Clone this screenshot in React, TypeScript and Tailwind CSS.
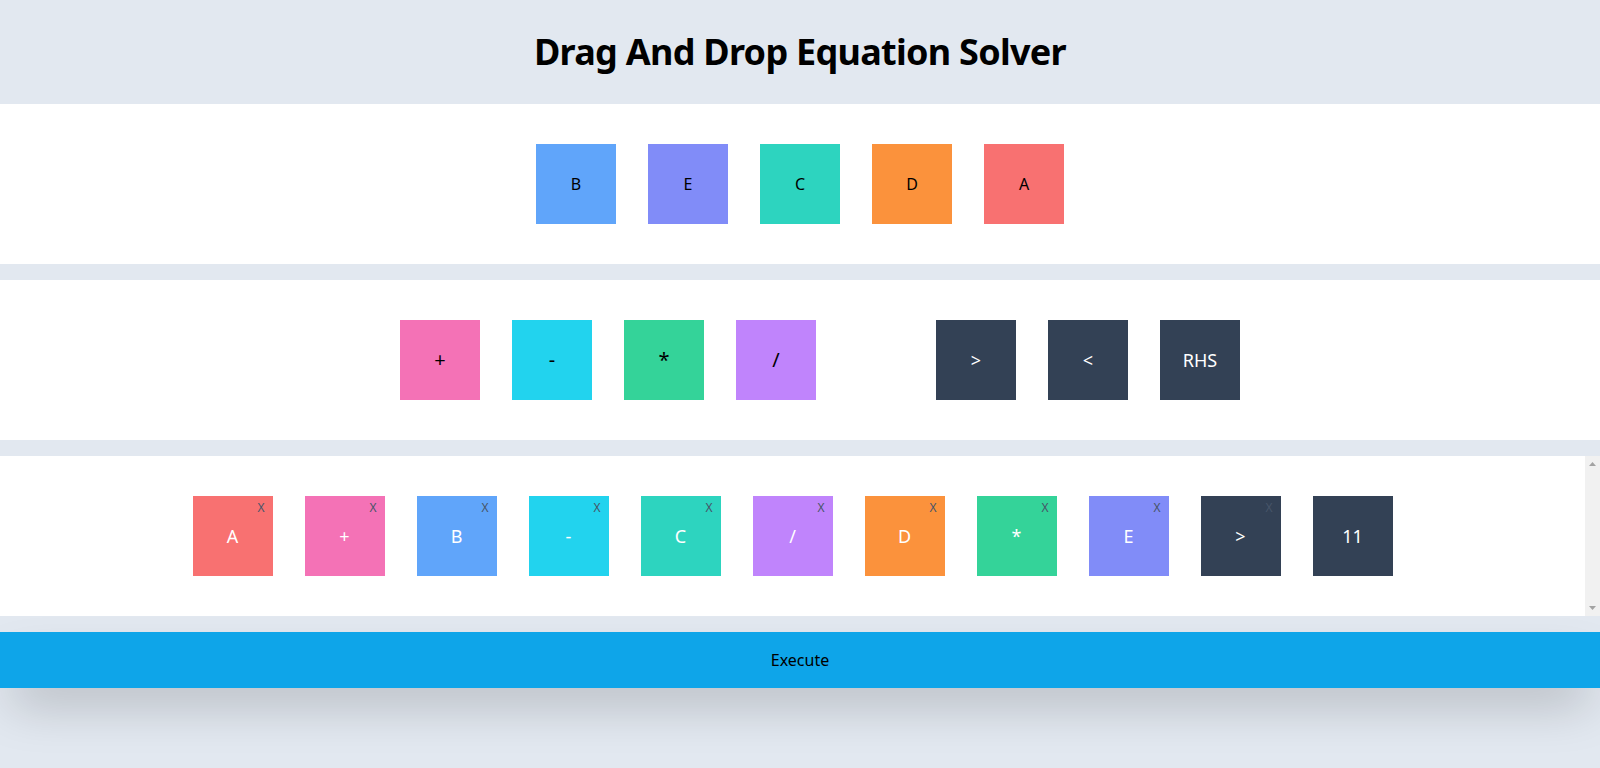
import React from 'react'

const sources = [
  { label: 'B', bg: 'bg-[#60a5fa]' },
  { label: 'E', bg: 'bg-[#818cf8]' },
  { label: 'C', bg: 'bg-[#2dd4bf]' },
  { label: 'D', bg: 'bg-[#fb923c]' },
  { label: 'A', bg: 'bg-[#f87171]' },
]

const operators = [
  { label: '+', bg: 'bg-[#f472b6]' },
  { label: '-', bg: 'bg-[#22d3ee]' },
  { label: '*', bg: 'bg-[#34d399]' },
  { label: '/', bg: 'bg-[#c084fc]' },
]

const comparators = ['>', '<', 'RHS']

const equation = [
  { label: 'A', bg: 'bg-[#f87171]', remove: true },
  { label: '+', bg: 'bg-[#f472b6]', remove: true },
  { label: 'B', bg: 'bg-[#60a5fa]', remove: true },
  { label: '-', bg: 'bg-[#22d3ee]', remove: true },
  { label: 'C', bg: 'bg-[#2dd4bf]', remove: true },
  { label: '/', bg: 'bg-[#c084fc]', remove: true },
  { label: 'D', bg: 'bg-[#fb923c]', remove: true },
  { label: '*', bg: 'bg-[#34d399]', remove: true },
  { label: 'E', bg: 'bg-[#818cf8]', remove: true },
  { label: '>', bg: 'bg-[#334155]', remove: true },
  { label: '11', bg: 'bg-[#334155]', remove: false },
]

const App = () => {
  return (
    <div className="min-h-screen bg-[#e2e8f0] font-['Noto_Sans',sans-serif]">
      <header className="py-8">
        <h1 className="text-center text-4xl font-bold tracking-[-0.02em] text-black">Drag And Drop Equation Solver</h1>
      </header>

      <section className="bg-white p-10 flex justify-center gap-8">
        {sources.map((s) => (
          <div key={s.label} className={`w-20 h-20 flex items-center justify-center text-base text-black ${s.bg}`}>
            {s.label}
          </div>
        ))}
      </section>

      <section className="mt-4 bg-white p-10 pl-20 flex justify-center gap-[120px]">
        <div className="flex gap-8">
          {operators.map((o) => (
            <div key={o.label} className={`w-20 h-20 flex items-center justify-center text-xl text-black ${o.bg}`}>
              {o.label}
            </div>
          ))}
        </div>
        <div className="flex gap-8">
          {comparators.map((c) => (
            <div key={c} className="w-20 h-20 flex items-center justify-center text-lg text-white bg-[#334155]">
              {c}
            </div>
          ))}
        </div>
      </section>

      <section className="mt-4 bg-white h-40 flex">
        <div className="flex-1 p-10 flex justify-center gap-8">
          {equation.map((e, i) => (
            <div key={i} className={`relative w-20 h-20 shrink-0 flex items-center justify-center text-lg text-white ${e.bg}`}>
              {e.label}
              {e.remove && (
                <span className="absolute top-1 right-2 text-xs text-[#475569]">X</span>
              )}
            </div>
          ))}
        </div>
        {/* scrollbar track */}
        <div className="w-[15px] bg-[#f1f1f1] flex flex-col items-center justify-between py-[6px]">
          <svg width="7" height="4" viewBox="0 0 7 4">
            <path d="M3.5 0 L7 4 L0 4 Z" fill="#a3a3a3" />
          </svg>
          <svg width="7" height="4" viewBox="0 0 7 4">
            <path d="M0 0 L7 0 L3.5 4 Z" fill="#a3a3a3" />
          </svg>
        </div>
      </section>

      <button className="mt-4 w-full h-14 bg-[#0ea5e9] text-base text-black shadow-2xl">
        Execute
      </button>
    </div>
  )
}

export default App
